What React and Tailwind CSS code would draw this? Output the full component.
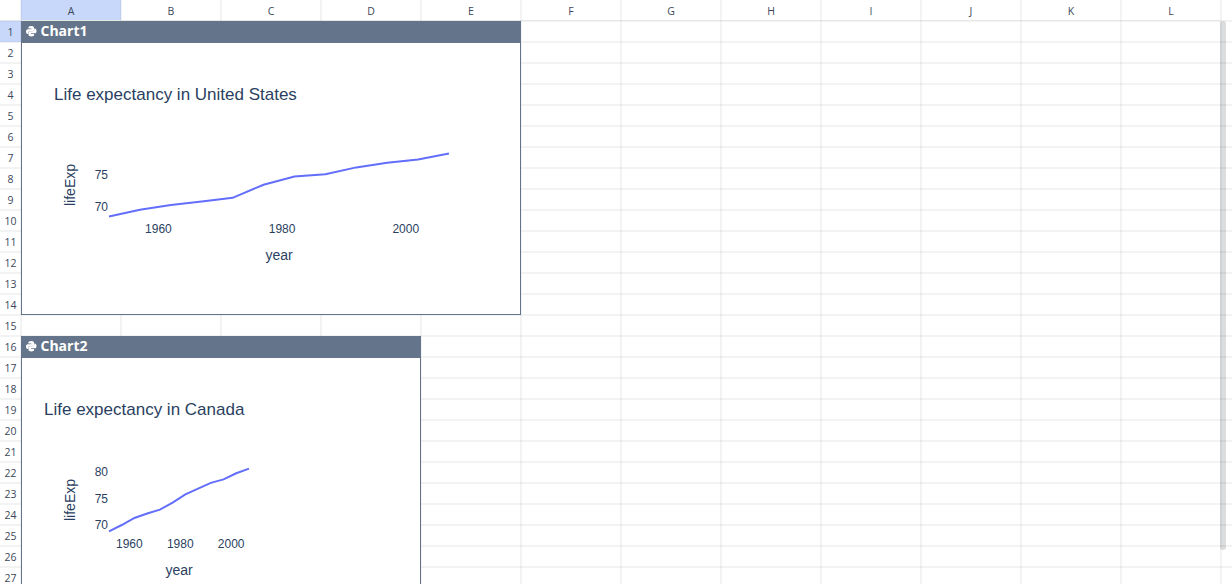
const columns = 'ABCDEFGHIJKL'.split('');
const rows = Array.from({ length: 27 }, (_, i) => i + 1);

const usa = [68.44, 69.49, 70.21, 70.76, 71.34, 73.38, 74.65, 75.02, 76.09, 76.81, 77.31, 78.242];
const canada = [68.75, 69.96, 71.3, 72.13, 72.88, 74.21, 75.76, 76.86, 77.95, 78.61, 79.77, 80.653];

const TOP = 111.6;
const BOTTOM = 174.4;

function PythonIcon() {
  const snake =
    'M5.2 0C3.2 0 2.4.8 2.4 1.7V2.4H5.5V3.2H1.7C.6 3.2 0 4.2 0 5.6S.6 8 1.7 8H2.3V6.7C2.3 5.8 3.1 5.3 4 5.3H6.7C7.5 5.3 8.1 4.5 8.1 3.7V1.7C8.1 .6 7 0 5.2 0Z';
  return (
    <svg viewBox="0 0 10.6 10.6" className="h-[10.5px] w-[10.5px] shrink-0 fill-white">
      <path d={snake} />
      <path d={snake} transform="rotate(180 5.3 5.3)" />
    </svg>
  );
}

function LineChart({ title, titleX, width, plotWidth, values, yTicks }) {
  const min = values[0];
  const max = values[values.length - 1];
  const px = (year) => 88 + ((year - 1952) / 55) * plotWidth;
  const py = (v) => BOTTOM - ((v - min) / (max - min)) * (BOTTOM - TOP);
  const points = values.map((v, i) => `${px(1952 + i * 5)},${py(v)}`).join(' ');
  return (
    <svg
      width={width}
      height="271"
      viewBox={`1 1 ${width} 271`}
      className="block fill-[#2a3f5f] font-['Liberation_Sans',sans-serif]"
    >
      <text x={titleX} y="58" className="text-[17px]">{title}</text>
      <polyline points={points} className="fill-none stroke-[#636efa]" strokeWidth="2" />
      {yTicks.map((t) => (
        <text key={t} x="87" y={py(t) + 4.2} textAnchor="end" className="text-[12px]">{t}</text>
      ))}
      {[1960, 1980, 2000].map((t) => (
        <text key={t} x={px(t)} y="191" textAnchor="middle" className="text-[12px]">{t}</text>
      ))}
      <text x={88 + plotWidth / 2} y="218" textAnchor="middle" className="text-[14px]">year</text>
      <text transform="translate(54.2 143) rotate(-90)" textAnchor="middle" className="text-[14px]">lifeExp</text>
    </svg>
  );
}

function ChartCell({ name, className, children }) {
  return (
    <section className={`h-[294px] shrink-0 border border-[#64748b] bg-white ${className}`}>
      <header className="flex h-[21px] items-center gap-1 bg-[#64748b] pb-[2px] pl-1 text-white">
        <PythonIcon />
        <span className="pb-px font-['Open_Sans',sans-serif] text-[14px] leading-[18px] font-bold">{name}</span>
      </header>
      {children}
    </section>
  );
}

export default function App() {
  return (
    <main className="flex h-[584px] w-[1232px] flex-col overflow-hidden bg-white font-['Open_Sans',sans-serif] text-[10.5px] text-[#3c4859]">
      <div className="flex h-[20px] shrink-0 bg-[linear-gradient(90deg,#0000000c_2px,transparent_2px)] bg-[size:100px_100%] bg-[position:20px_0] pl-[21px]">
        {columns.map((c) => (
          <div
            key={c}
            className={`flex w-[100px] shrink-0 items-center justify-center pt-[3px] ${c === 'A' ? 'bg-[#2563eb40]' : ''}`}
          >
            {c}
          </div>
        ))}
      </div>
      <div className="flex min-h-0 flex-1 overflow-hidden bg-[linear-gradient(90deg,#0000000c_2px,transparent_2px),linear-gradient(180deg,#0000000c_2px,transparent_2px)] bg-[size:100px_100%,100%_21px] bg-[position:20px_0,0_0]">
        <div className="w-[21px] shrink-0 border-t border-[#0000000c]">
          {rows.map((r) => (
            <div
              key={r}
              className={`flex h-[21px] items-center justify-center pt-[2px] ${r === 1 ? 'bg-[#2563eb40]' : ''}`}
            >
              {r}
            </div>
          ))}
        </div>
        <div className="flex flex-1 flex-col gap-[21px] border-t border-[#0000000c]">
          <ChartCell name="Chart1" className="w-[500px]">
            <LineChart title="Life expectancy in United States" titleX="33" width={498} plotWidth={340} values={usa} yTicks={[75, 70]} />
          </ChartCell>
          <ChartCell name="Chart2" className="w-[400px]">
            <LineChart title="Life expectancy in Canada" titleX="23" width={398} plotWidth={140} values={canada} yTicks={[80, 75, 70]} />
          </ChartCell>
        </div>
        <div className="mt-px mr-[6px] h-[529px] w-[6px] shrink-0 rounded-full bg-[#11182726]" />
      </div>
    </main>
  );
}
